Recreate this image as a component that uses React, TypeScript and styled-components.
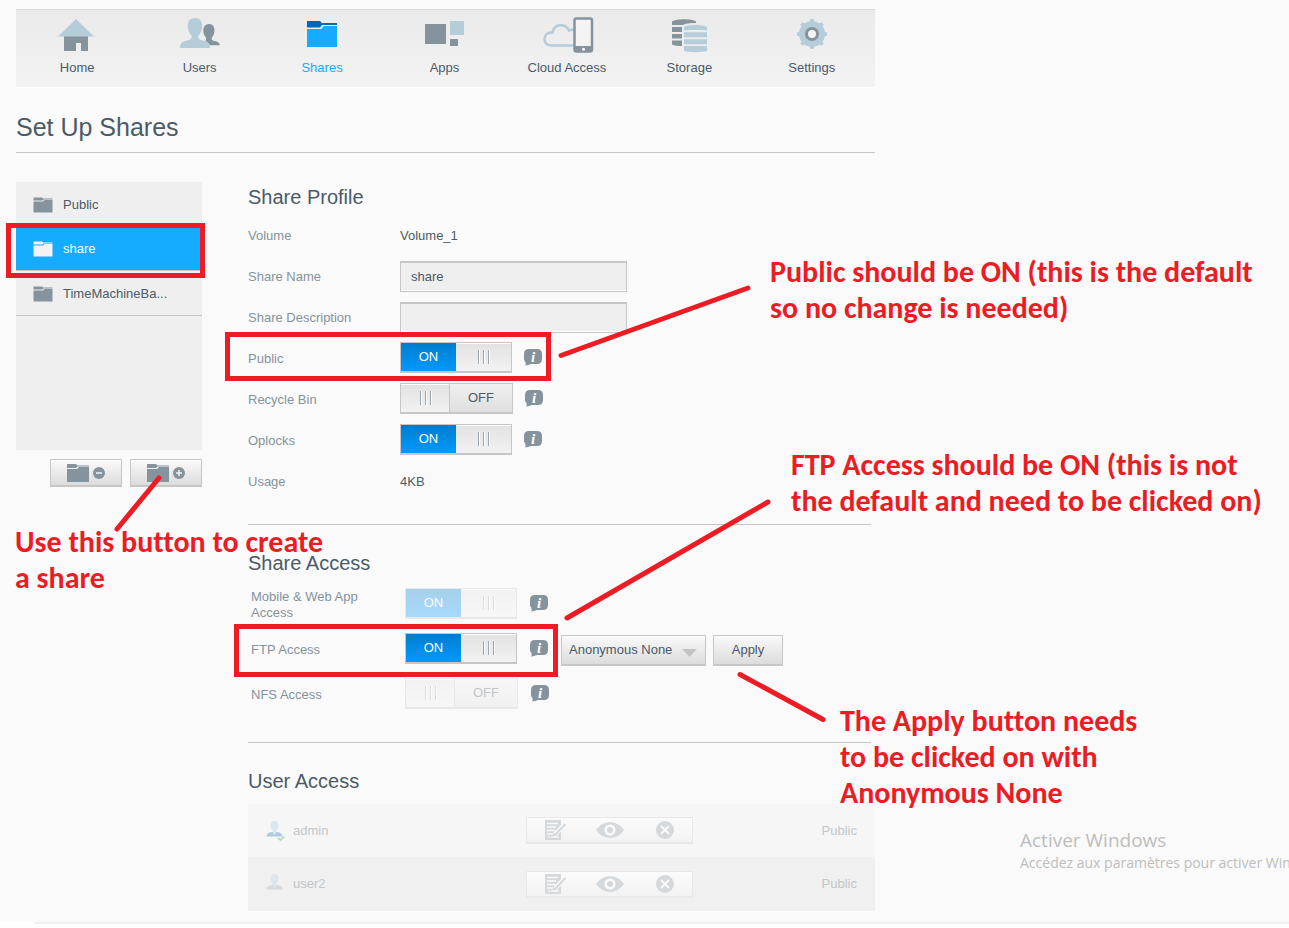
import React from 'react';
import styled, { createGlobalStyle, css } from 'styled-components';

const color = {
  page: '#fafafa',
  text: '#4b5a68',
  label: '#85929c',
  icon: '#85939d',
  iconLight: '#b5ccd9',
  line: '#c6c6c6',
  panel: '#efefef',
  blue: '#15abff',
  red: '#ed1c24',
};

const GlobalStyle = createGlobalStyle`
  *, *::before, *::after { box-sizing: border-box; }
  body {
    margin: 0;
    background: #fff;
    color: ${color.text};
    font: 13px/16px "Liberation Sans", Arial, sans-serif;
    overflow-x: hidden;
  }
  button, input, select { font: inherit; color: inherit; margin: 0; }
  h1, h2 { margin: 0; font-weight: 400; }
`;

const Page = styled.div`
  position: relative;
  background: ${color.page};
  padding: 9px 16px 11px;
  overflow: hidden;
`;

const Dashboard = styled.div`
  max-width: 859px;
`;

const PageEnd = styled.div`
  height: 2px;
  margin-left: 35px;
  background: #eee;
`;

const Nav = styled.nav`
  display: grid;
  grid-template-columns: repeat(7, 1fr);
  height: 79px;
  padding-right: 2px;
  border-top: 1px solid #d8d8d8;
  border-bottom: 1px solid #fff;
  background: linear-gradient(#eaeaea, #f3f3f3);
`;

const NavLink = styled.a<{ $active?: boolean }>`
  display: flex;
  flex-direction: column;
  align-items: center;
  gap: 5px;
  padding-top: 5px;
  text-decoration: none;
  color: ${(p) => (p.$active ? color.blue : color.text)};
`;

const PageTitle = styled.h1`
  height: 65px;
  padding-top: 23px;
  border-bottom: 1px solid ${color.line};
  font-size: 25px;
  line-height: 32px;
`;

const Columns = styled.div`
  display: grid;
  grid-template-columns: 186px minmax(0, 1fr);
  column-gap: 46px;
  padding-top: 29px;
`;

const ShareLink = styled.a<{ $active?: boolean }>`
  display: flex;
  align-items: center;
  gap: 10px;
  height: 45px;
  padding: 2px 0 0 17px;
  border-bottom: 1px solid ${color.line};
  text-decoration: none;
  color: ${(p) => (p.$active ? '#fff' : color.text)};
  background: ${(p) => (p.$active ? color.blue : 'transparent')};
`;

const ShareList = styled.ul`
  list-style: none;
  margin: 0;
  padding: 0;
  height: 268px;
  background: ${color.panel};
  li:first-child ${ShareLink} { height: 44px; }
`;

const ListActions = styled.div`
  display: flex;
  justify-content: flex-end;
  gap: 8px;
  margin-top: 9px;
`;

const raised = css`
  border: 1px solid ${color.line};
  border-bottom-width: 2px;
  background: linear-gradient(#fafafa, #dcdcdc);
  box-shadow: inset 0 1px #fff;
`;

const IconButton = styled.button`
  ${raised}
  display: flex;
  align-items: center;
  justify-content: center;
  width: 72px;
  height: 28px;
  padding: 0;
`;

const Section = styled.section<{ $first?: boolean }>`
  padding-top: ${(p) => (p.$first ? 3 : 26)}px;
`;

const SectionTitle = styled.h2`
  font-size: 20px;
  line-height: 24px;
`;

const Divider = styled.hr`
  height: 1px;
  margin: 0 4px 0 0;
  border: 0;
  background: ${color.line};
`;

const Profile = styled.div`
  display: grid;
  grid-auto-rows: 41px;
  margin: 6px 0 22px;
`;

const Access = styled.div`
  display: grid;
  grid-auto-rows: 45px;
  margin: 7px 0 25px;
  padding-left: 3px;
`;

const Row = styled.div`
  display: grid;
  grid-template-columns: 152px minmax(0, 1fr);
  align-items: center;
`;

const AccessRow = styled(Row)`
  grid-template-columns: 154px minmax(0, 1fr);
`;

const Label = styled.label`
  color: ${color.label};
  padding-right: 32px;
`;

const Value = styled.div`
  display: flex;
  align-items: center;
  gap: 12px;
  ${AccessRow} & { gap: 13px; }
`;

const TextInput = styled.input`
  width: 227px;
  height: 31px;
  padding: 0 10px 2px;
  border: 1px solid ${color.line};
  border-top-width: 2px;
  border-radius: 0;
  background: ${color.panel};
  box-shadow: inset 0 -1px #fff;
  outline: 0;
`;

const Switch = styled.label<{ $on: boolean; $dim?: boolean }>`
  position: relative;
  display: grid;
  grid-template-columns: ${(p) => (p.$on ? '55px 55px' : '48px 63px')};
  height: 31px;
  margin-bottom: 2px;
  border: 1px solid ${color.line};
  border-bottom-width: 2px;
  line-height: 28px;
  text-align: center;
  opacity: ${(p) => (p.$dim ? 0.33 : 1)};
`;

const SwitchInput = styled.input`
  position: absolute;
  inset: 0;
  width: 100%;
  height: 100%;
  opacity: 0;
`;

const OnSide = styled.span`
  color: #fff;
  background: linear-gradient(#007dcc, #0099ff);
`;

const OffSide = styled.span`
  border-left: 1px solid ${color.line};
  background: linear-gradient(#f0f0f0, #dfdfdf);
`;

const Handle = styled.span`
  display: flex;
  align-items: center;
  justify-content: center;
  background: linear-gradient(#e2e2e2, #f2f2f2);
  box-shadow: inset 0 1px #fff;
`;

const InfoButton = styled.button`
  display: flex;
  margin-bottom: 2px;
  padding: 0;
  border: 0;
  background: none;
`;

const SelectBox = styled.span`
  position: relative;
  display: block;
  svg { position: absolute; right: 9px; top: 14px; pointer-events: none; }
`;

const Select = styled.select`
  ${raised}
  appearance: none;
  display: block;
  width: 145px;
  height: 31px;
  padding: 0 30px 1px 7px;
  border-radius: 0;
`;

const PushButton = styled.button`
  ${raised}
  width: 70px;
  height: 31px;
  padding: 0;
`;

const FieldGroup = styled.div`
  display: flex;
  gap: 7px;
  padding-top: 2px;
`;

const UserTable = styled.table`
  width: 100%;
  margin-top: 11px;
  border-collapse: collapse;
  color: #c0c6ca;
  td { height: 53px; padding: 0; }
  tr { background: #f6f6f6; }
  tr:nth-child(even) { background: #f0f0f0; }
  tr:nth-child(even) td { height: 54px; }
`;

const IconCell = styled.td`
  width: 45px;
  svg { display: block; margin-left: 18px; }
`;

const PermissionCell = styled.td`
  width: 167px;
`;

const AccessCell = styled.td`
  width: 182px;
  text-align: right;
  && { padding-right: 18px; }
`;

const Permissions = styled.div`
  display: grid;
  grid-template-columns: repeat(3, 1fr);
  height: 27px;
  border: 1px solid #e8e8e8;
  border-bottom-width: 2px;
  background: linear-gradient(#fbfbfb, #f3f3f3);
`;

const PermissionButton = styled.button`
  display: flex;
  align-items: center;
  justify-content: center;
  padding: 0;
  border: 0;
  background: none;
`;

const MarkLines = styled.svg`
  position: absolute;
  left: 0;
  top: 0;
  pointer-events: none;
`;

const Note = styled.p<{ $x: number; $y: number }>`
  position: absolute;
  left: ${(p) => p.$x}px;
  top: ${(p) => p.$y}px;
  margin: 0;
  white-space: nowrap;
  pointer-events: none;
  color: ${color.red};
  font: 700 30px/36px Carlito, Calibri, Lato, sans-serif;
  font-variant-ligatures: none;
`;

const Watermark = styled.div`
  position: absolute;
  left: 1020px;
  top: 828px;
  white-space: nowrap;
  pointer-events: none;
  color: #bdbdbd;
  font: 14px/22px "Open Sans", "Noto Sans", sans-serif;
`;

const WatermarkTitle = styled.div`
  font-size: 19px;
  line-height: 24px;
`;

const d = color.icon;
const l = color.iconLight;

const navIcons: Record<string, React.ReactNode> = {
  Home: (
    <>
      <path d="M17 20h24v16h-7v-8h-5v8H17z" fill={d} />
      <path d="M29 4l18 17.500H11z" fill={l} />
    </>
  ),
  Users: (
    <>
      <path d="M39 9c3.500 0 5.500 2.800 5.500 6.500 0 3.200-1.400 5.500-2.700 7.200-.3 2.200.4 2.800 2.700 3.400 3 .8 5 1.400 5.300 4.200H40c-1-2.300-3-3.300-5-4 .9-.6 1.300-1.800 1-3.500-1.500-1.800-2.700-4-2.700-7.300C33.300 11.800 35.500 9 39 9z" fill={d} />
      <path d="M25 3c4.600 0 7.300 3.300 7.300 8 0 4.200-1.800 7.400-3.900 9.300-.3 3.200.4 4.300 4.100 5.200 4.500 1 7.500 2 7.700 7.500H10c.2-5.500 3.200-6.500 7.500-7.500 3.700-.9 4.400-2 4.100-5.200-2.100-1.900-3.900-5.100-3.900-9.300 0-4.700 2.700-8 7.300-8z" fill={l} />
    </>
  ),
  Shares: (
    <>
      <path d="M15 6h13l2 2h15v2H30l-2 2.500H15z" fill="#0068b4" />
      <path d="M15 14h14l3-3h13v21H15z" fill={color.blue} />
    </>
  ),
  Apps: (
    <>
      <path d="M11 9h21v20H11zM36 24h8v7h-8z" fill={d} />
      <path d="M36 6h14v14H36z" fill={l} />
    </>
  ),
  'Cloud Access': (
    <>
      <path d="M38 30.500H14.500C4.500 30.500 6 17.500 14 17.500h1.500C17 9 28 7.500 32 15.500c2-1 4-1 6 0" fill="none" stroke={l} strokeWidth="2.500" />
      <rect x="37.500" y="3.500" width="17.500" height="33" rx="2" fill="#f4f4f4" stroke={d} strokeWidth="2.500" />
      <path d="M37 31h18v6H37z" fill={d} />
      <circle cx="46.500" cy="34.300" r="1.500" fill="#fff" />
    </>
  ),
  Storage: (
    <>
      <path d="M13 10V6.500C17 3.500 33 3.500 37 6.500V8c-6 0-11 .5-13 2zM13 12h10v5H13zM13 19h10v4.500H13zM13 25.500h10V31c-4 0-8-.5-10-1.500z" fill={d} />
      <path d="M25 12c3-2.700 20-2.700 23 0v3.500c-4-.6-18-.6-23 0zM25 17.300h23v5H25zM25 24.300h23v5H25zM25 31h23v5c-5 1.500-18 1.500-23 0z" fill={l} />
    </>
  ),
  Settings: (
    <>
      <g fill={l}>
        <circle cx="30" cy="19" r="13" />
        {[0, 45, 90, 135].map((a) => (
          <rect key={a} x="28" y="4" width="4" height="30" rx="1" transform={`rotate(${a} 30 19)`} />
        ))}
      </g>
      <circle cx="30" cy="19" r="5.500" fill="#f4f4f4" stroke={d} strokeWidth="3" />
    </>
  ),
};

const Folder = ({ fill = d }: { fill?: string }) => (
  <svg width="20" height="16" viewBox="0 0 20 16" aria-hidden="true">
    <path d="M.500.500h8.500l1 1h9.500v1H10.500l-1 1H.500z" fill={fill} />
    <path d="M.500 4.500H10l1.500-1.500h8v12.500H.500z" fill={fill} />
  </svg>
);

const FolderAction = ({ plus }: { plus?: boolean }) => (
  <svg width="40" height="20" viewBox="0 0 40 20" aria-hidden="true">
    <path d="M1 1h9l1.500 1.500H23v1H11.500L10 5H1z" fill={d} />
    <path d="M1 6h10l2-2h10v15H1z" fill={d} />
    <circle cx="33" cy="10" r="6" fill={d} />
    <path d={plus ? 'M30 10h6M33 7v6' : 'M30 10h6'} stroke="#f2f2f2" strokeWidth="1.500" />
  </svg>
);

const Info = ({ about }: { about: string }) => (
  <InfoButton type="button" aria-label={`About ${about}`}>
    <svg width="18" height="17" viewBox="0 0 18 17">
      <path d="M5 0h8q5 0 5 5v5q0 5-5 5H7Q4 16 1 16.500 2.300 14.500 1.200 12.500 0 11.500 0 10V5q0-5 5-5z" fill={d} />
      <text x="9" y="12.500" textAnchor="middle" fill="#fff" fontFamily="Liberation Serif" fontStyle="italic" fontWeight="700" fontSize="15">i</text>
    </svg>
  </InfoButton>
);

const Grip = () => (
  <Handle>
    <svg width="13" height="14" viewBox="0 0 13 14" aria-hidden="true">
      <path d="M1 0h1v14H1zM6 0h1v14H6zM11 0h1v14h-1z" fill="#9aa7b0" />
      <path d="M2 0h1v14H2zM7 0h1v14H7zM12 0h1v14h-1z" fill="#fff" />
    </svg>
  </Handle>
);

const Toggle = ({ id, on, dim }: { id: string; on: boolean; dim?: boolean }) => (
  <Switch $on={on} $dim={dim}>
    <SwitchInput id={id} type="checkbox" defaultChecked={on} disabled={dim} />
    {on ? (
      <>
        <OnSide>ON</OnSide>
        <Grip />
      </>
    ) : (
      <>
        <Grip />
        <OffSide>OFF</OffSide>
      </>
    )}
  </Switch>
);

const UserIcon = ({ admin }: { admin?: boolean }) => (
  <svg width="20" height="22" viewBox="0 0 20 22" aria-hidden="true">
    <path d="M.500 16.500c.3-3.500 2.500-3.800 5.500-4.500h5c3 .7 5.200 1 5.500 4.500z" fill={admin ? '#a9cbe1' : '#d3d9dd'} />
    <path d="M8.500 1c2.600 0 4 2 4 4.600 0 2.400-1 4-2.200 5.200 0 2-.8 3.200-1.800 4.200-1-1-1.800-2.200-1.800-4.200C5.500 9.600 4.500 8 4.500 5.600 4.500 3 5.900 1 8.500 1z" fill="#d9e8f0" />
    {admin && <path d="M12 18l2.500 2 4-3.500" fill="none" stroke="#b0e0c6" strokeWidth="2" />}
  </svg>
);

const faded = '#d4d9dd';

const EditIcon = () => (
  <svg width="22" height="20" viewBox="0 0 22 20">
    <path d="M1 0h16v20H1z" fill={faded} />
    <path d="M3 3.500h11M3 7h9M3 10.500h8M3 14h6M4 17h2M7 17h8" stroke="#fafafa" strokeWidth="1.500" />
    <path d="M11 14.500L21 4" stroke="#fafafa" strokeWidth="4.500" />
    <path d="M11 15L21.500 4" stroke={faded} strokeWidth="2" />
  </svg>
);

const EyeIcon = () => (
  <svg width="28" height="16" viewBox="0 0 28 16">
    <path d="M0 8c7-10.500 21-10.500 28 0-7 10.500-21 10.500-28 0z" fill={faded} />
    <circle cx="14" cy="8" r="4.300" fill={faded} stroke="#fafafa" strokeWidth="2.500" />
  </svg>
);

const DenyIcon = () => (
  <svg width="18" height="18" viewBox="0 0 18 18">
    <circle cx="9" cy="9" r="9" fill={faded} />
    <path d="M5 5l8 8M13 5l-8 8" stroke="#fafafa" strokeWidth="1.800" />
  </svg>
);

const shares = ['Public', 'share', 'TimeMachineBa...'];
const users = ['admin', 'user2'];

export default function App() {
  return (
    <>
      <GlobalStyle />
      <Page>
        <Dashboard>
          <Nav>
            {Object.keys(navIcons).map((name) => (
              <NavLink key={name} href="#" $active={name === 'Shares'}>
                <svg width="60" height="40" viewBox="0 0 60 40" aria-hidden="true">{navIcons[name]}</svg>
                {name}
              </NavLink>
            ))}
          </Nav>
          <PageTitle>Set Up Shares</PageTitle>
          <Columns>
            <aside>
              <ShareList>
                {shares.map((name) => (
                  <li key={name}>
                    <ShareLink href="#" $active={name === 'share'}>
                      <Folder fill={name === 'share' ? '#f2f2f2' : d} />
                      {name}
                    </ShareLink>
                  </li>
                ))}
              </ShareList>
              <ListActions>
                <IconButton type="button" aria-label="Remove share"><FolderAction /></IconButton>
                <IconButton type="button" aria-label="Add share"><FolderAction plus /></IconButton>
              </ListActions>
            </aside>
            <main>
              <Section $first>
                <SectionTitle>Share Profile</SectionTitle>
                <Profile>
                  <Row><Label as="span">Volume</Label><Value>Volume_1</Value></Row>
                  <Row>
                    <Label htmlFor="name">Share Name</Label>
                    <Value><TextInput id="name" defaultValue="share" /></Value>
                  </Row>
                  <Row>
                    <Label htmlFor="description">Share Description</Label>
                    <Value><TextInput id="description" /></Value>
                  </Row>
                  <Row>
                    <Label htmlFor="public">Public</Label>
                    <Value><Toggle id="public" on /><Info about="Public" /></Value>
                  </Row>
                  <Row>
                    <Label htmlFor="recycle">Recycle Bin</Label>
                    <Value><Toggle id="recycle" on={false} /><Info about="Recycle Bin" /></Value>
                  </Row>
                  <Row>
                    <Label htmlFor="oplocks">Oplocks</Label>
                    <Value><Toggle id="oplocks" on /><Info about="Oplocks" /></Value>
                  </Row>
                  <Row><Label as="span">Usage</Label><Value>4KB</Value></Row>
                </Profile>
              </Section>
              <Divider />
              <Section>
                <SectionTitle>Share Access</SectionTitle>
                <Access>
                  <AccessRow>
                    <Label htmlFor="mobile">Mobile &amp; Web App Access</Label>
                    <Value><Toggle id="mobile" on dim /><Info about="Mobile & Web App Access" /></Value>
                  </AccessRow>
                  <AccessRow>
                    <Label htmlFor="ftp">FTP Access</Label>
                    <Value>
                      <Toggle id="ftp" on />
                      <Info about="FTP Access" />
                      <FieldGroup>
                        <SelectBox>
                          <Select aria-label="FTP anonymous access">
                            <option>Anonymous None</option>
                          </Select>
                          <svg width="15" height="8" viewBox="0 0 15 8" aria-hidden="true">
                            <path d="M0 0h15L7.500 8z" fill="#c3c3c3" />
                          </svg>
                        </SelectBox>
                        <PushButton type="button">Apply</PushButton>
                      </FieldGroup>
                    </Value>
                  </AccessRow>
                  <AccessRow>
                    <Label htmlFor="nfs">NFS Access</Label>
                    <Value><Toggle id="nfs" on={false} dim /><Info about="NFS Access" /></Value>
                  </AccessRow>
                </Access>
              </Section>
              <Divider />
              <Section>
                <SectionTitle>User Access</SectionTitle>
                <UserTable>
                  <tbody>
                    {users.map((name) => (
                      <tr key={name}>
                        <IconCell><UserIcon admin={name === 'admin'} /></IconCell>
                        <td>{name}</td>
                        <PermissionCell>
                          <Permissions>
                            <PermissionButton type="button" aria-label="Read and write"><EditIcon /></PermissionButton>
                            <PermissionButton type="button" aria-label="Read only"><EyeIcon /></PermissionButton>
                            <PermissionButton type="button" aria-label="Deny access"><DenyIcon /></PermissionButton>
                          </Permissions>
                        </PermissionCell>
                        <AccessCell>Public</AccessCell>
                      </tr>
                    ))}
                  </tbody>
                </UserTable>
              </Section>
            </main>
          </Columns>
        </Dashboard>

        <MarkLines width="100%" height="100%" fill="none" stroke={color.red} strokeWidth="5" aria-hidden="true">
          <rect x="8.500" y="225.500" width="194" height="50" />
          <rect x="227.500" y="334.500" width="321" height="44" />
          <rect x="236.500" y="626.500" width="319" height="48" />
          <path d="M561 355.500L748 288M567 618L768 502M740 674.500L823 719.500M159 478L117 529" strokeLinecap="round" />
        </MarkLines>
        <Note $x={770} $y={254}>Public should be ON (this is the default<br />so no change is needed)</Note>
        <Note $x={791} $y={447}>FTP Access should be ON (this is not<br />the default and need to be clicked on)</Note>
        <Note $x={840} $y={703}>The Apply button needs<br />to be clicked on with<br />Anonymous None</Note>
        <Note $x={15} $y={524}>Use this button to create<br />a share</Note>
        <Watermark>
          <WatermarkTitle>Activer Windows</WatermarkTitle>
          Accédez aux paramètres pour activer Windows.
        </Watermark>
      </Page>
      <PageEnd />
    </>
  );
}
